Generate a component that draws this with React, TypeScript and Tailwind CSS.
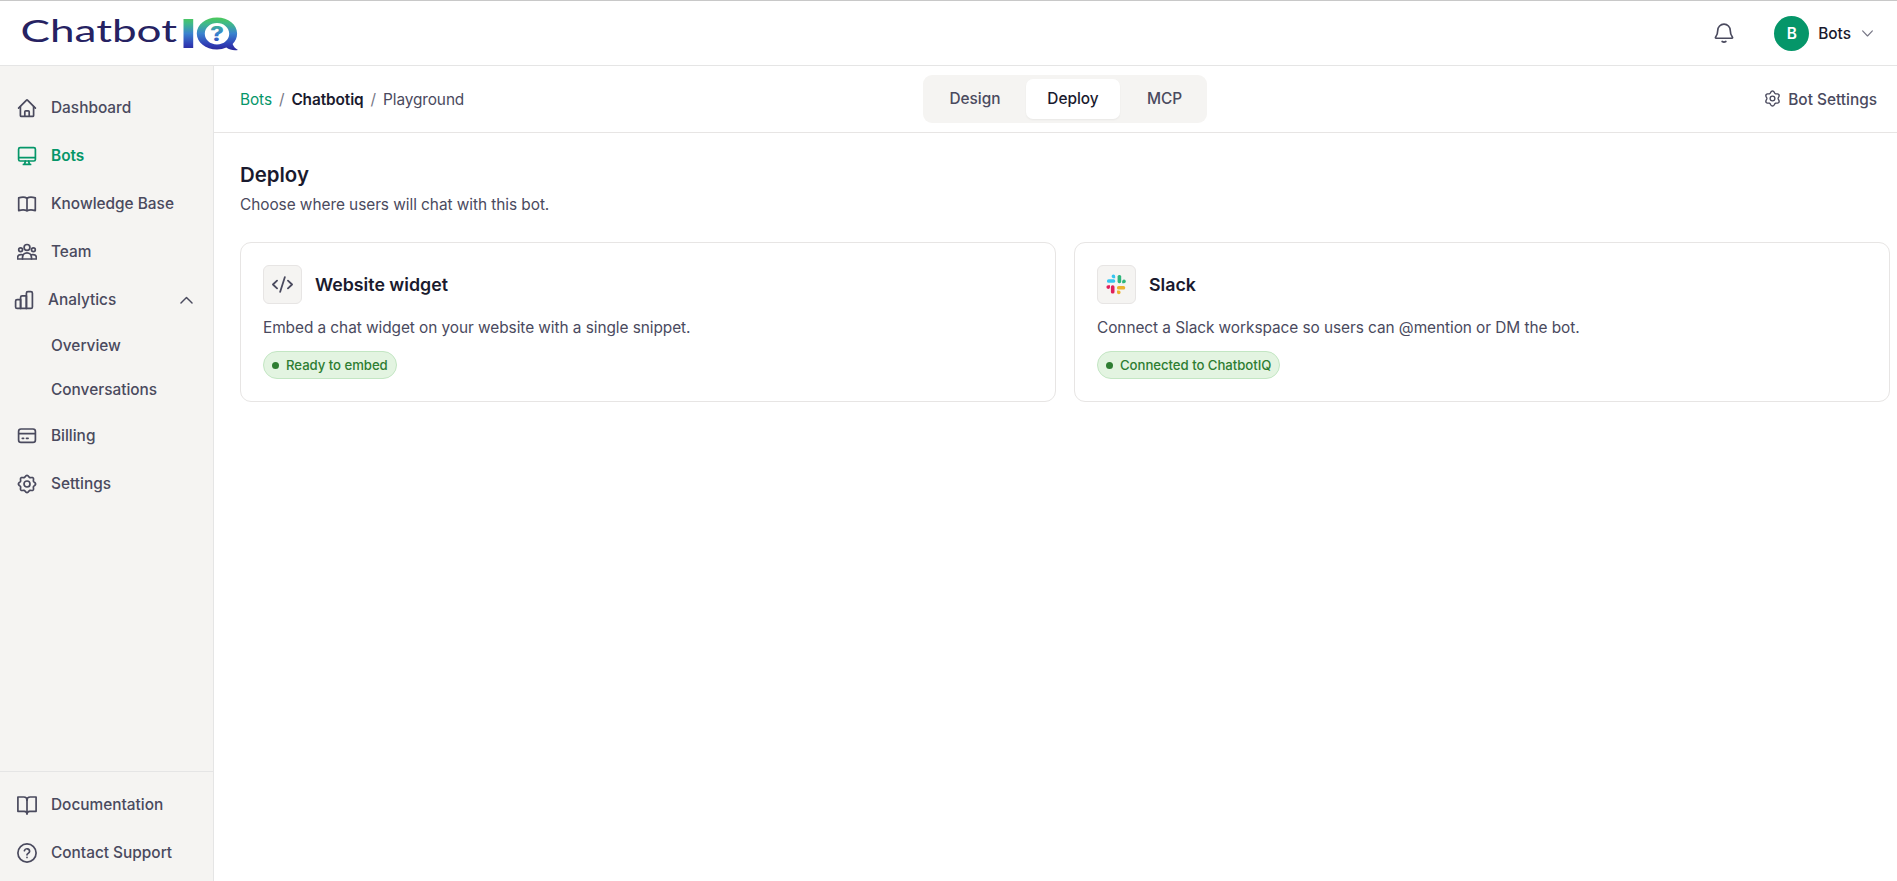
import type { ReactNode } from "react";

function Icon({
  size = 20,
  stroke = 1.7,
  className = "",
  children,
}: {
  size?: number;
  stroke?: number;
  className?: string;
  children: ReactNode;
}) {
  return (
    <svg
      width={size}
      height={size}
      viewBox="0 0 20 20"
      fill="none"
      stroke="currentColor"
      strokeWidth={stroke}
      strokeLinecap="round"
      strokeLinejoin="round"
      className={`shrink-0 ${className}`}
    >
      {children}
    </svg>
  );
}

// Closed outline whose radius swings between the gear's teeth and notches
function gearPath(teeth: number, radius: number, depth: number) {
  const points = Array.from({ length: 121 }, (_, i) => {
    const angle = (i / 120) * Math.PI * 2;
    const r = radius + depth * Math.cos(teeth * angle);
    return `${(10 + r * Math.sin(angle)).toFixed(2)} ${(10 - r * Math.cos(angle)).toFixed(2)}`;
  });
  return `M${points.join("L")}Z`;
}

const icons = {
  home: (
    <>
      <path d="M1.6 10.2 9.3 2.3a1 1 0 0 1 1.4 0l7.7 7.9" />
      <path d="M3.4 8.6v8.8c0 .6.4 1 1 1h11.2c.6 0 1-.4 1-1V8.6" />
      <path d="M7.8 18.2v-4.4c0-.6.4-1 1-1h2.4c.6 0 1 .4 1 1v4.4" />
    </>
  ),
  bots: (
    <>
      <rect x="1.6" y="1.6" width="16.8" height="13.4" rx="1.6" />
      <path d="M1.8 11.6h16.4M8.3 15.2l-.7 3M11.7 15.2l.7 3M6.4 18.4h7.2" />
    </>
  ),
  book: (
    <>
      <path d="M10 4.2C8.2 3 4.6 2.9 1.7 3.9v12.7c2.9-.9 6.5-.8 8.3.2 1.8-1 5.4-1.1 8.3-.2V3.9C15.4 2.9 11.8 3 10 4.2Z" />
      <path d="M10 4.2v12.4" />
    </>
  ),
  team: (
    <>
      <circle cx="10" cy="5.4" r="2.9" />
      <circle cx="3.6" cy="7.7" r="1.9" />
      <circle cx="16.4" cy="7.7" r="1.9" />
      <path d="M5.5 17v-1.6a4.5 4.5 0 0 1 9 0V17" />
      <path d="M5.6 12.8c-2.8-.8-5 .6-5 2.9V17h18.8v-1.3c0-2.3-2.2-3.7-5-2.9" />
    </>
  ),
  analytics: (
    <>
      <path d="M1.6 11.2c0-.9.6-1.5 1.5-1.5h3.5v8.7H3.1c-.9 0-1.5-.6-1.5-1.5Z" />
      <path d="M6.6 7.4c0-.9.6-1.5 1.5-1.5h4.3v12.5H6.6Z" />
      <path d="M12.4 3.2c0-.9.6-1.6 1.5-1.6h3c.9 0 1.5.7 1.5 1.6v13.7c0 .9-.6 1.5-1.5 1.5h-4.5Z" />
    </>
  ),
  billing: (
    <>
      <rect x="1.6" y="3" width="16.8" height="13.4" rx="2.4" />
      <path d="M1.8 7.7h16.4M5.3 12.3h1.3M9.5 12.3h1.6" />
    </>
  ),
  settings: (
    <>
      <path d={gearPath(8, 7.8, 0.8)} />
      <circle cx="10" cy="10" r="3" />
    </>
  ),
  docs: (
    <>
      <path d="M10 5.2C10 3.4 8.6 2 6.8 2H.9v14.3h6.3c1.6 0 2.8 1 2.8 2.5 0-1.5 1.2-2.5 2.8-2.5h6.3V2h-5.9C11.4 2 10 3.4 10 5.2Z" />
      <path d="M10 5.2v13.6" />
    </>
  ),
  help: (
    <>
      <circle cx="10" cy="10" r="9.1" />
      <path d="M7.4 7.7a2.65 2.65 0 0 1 5.2.7c0 1.7-2.6 2.1-2.6 3.4M10 14.4v.1" />
    </>
  ),
};

function NavItem({
  icon,
  label,
  active = false,
}: {
  icon: ReactNode;
  label: string;
  active?: boolean;
}) {
  return (
    <a
      className={`flex h-12 items-center gap-[14px] pl-[17px] ${
        active ? "font-semibold text-[#059669]" : "font-medium text-[#4a4a5e]"
      }`}
    >
      <Icon>{icon}</Icon>
      <span>{label}</span>
    </a>
  );
}

function Logo() {
  return (
    <svg width="220" height="40" viewBox="20 12.5 220 40">
      <defs>
        <linearGradient id="iq" x1="0" y1="17" x2="0" y2="49" gradientUnits="userSpaceOnUse">
          <stop offset="0" stopColor="#4cc95a" />
          <stop offset="0.2" stopColor="#3fb98a" />
          <stop offset="0.5" stopColor="#3a83cf" />
          <stop offset="0.85" stopColor="#2f3db5" />
          <stop offset="1" stopColor="#2b2a9c" />
        </linearGradient>
      </defs>
      <text
        x="20.5"
        y="41.5"
        fontFamily="Lato"
        fontSize="30.5"
        fill="#262262"
        textLength="156.5"
        lengthAdjust="spacingAndGlyphs"
      >
        Chatbot
      </text>
      <rect x="183.5" y="18.5" width="9.7" height="29" fill="url(#iq)" />
      <path
        fill="url(#iq)"
        fillRule="evenodd"
        d="M217 17c-11.4 0-20.2 7.2-20.2 16S205.600 49 217 49c3.500 0 6.500-.7 9.300-2 3.400 2.300 7.200 3.300 11.700 2.500-2.700-1.400-4.500-3.500-5.400-6 2.900-2.800 4.500-6.500 4.500-10.500 0-8.800-8.700-16-20.100-16Zm0 5.500c6.900 0 12.200 4.800 12.200 10.800S223.900 44 217 44s-12.200-4.700-12.200-10.700S210.100 22.500 217 22.500Z"
      />
      <text
        x="210"
        y="40.8"
        fontFamily="Inter"
        fontWeight="800"
        fontSize="20"
        fill="url(#iq)"
        textLength="14"
        lengthAdjust="spacingAndGlyphs"
      >
        ?
      </text>
    </svg>
  );
}

function SlackMark() {
  return (
    <svg width="21" height="21" viewBox="0 0 21 21">
      <g fill="#36C5F0">
        <rect x="1" y="5.2" width="8.2" height="3.6" rx="1.6" />
        <path d="M9.2 4.2H7.3a1.8 1.8 0 1 1 1.9-1.8Z" />
      </g>
      <g fill="#2EB67D">
        <rect x="11.6" y="1" width="3.6" height="8.2" rx="1.6" />
        <path d="M16.2 9.2V7.3a1.8 1.8 0 1 1 1.8 1.9Z" />
      </g>
      <g fill="#ECB22E">
        <rect x="11" y="12" width="8.2" height="3.6" rx="1.6" />
        <path d="M11 16.6h1.9a1.8 1.8 0 1 1-1.9 1.8Z" />
      </g>
      <g fill="#E01E5A">
        <rect x="4.9" y="11.3" width="3.6" height="8.2" rx="1.6" />
        <path d="M4 11.3v1.9a1.8 1.8 0 1 1-1.8-1.9Z" />
      </g>
    </svg>
  );
}

function ChannelCard({
  icon,
  title,
  description,
  status,
}: {
  icon: ReactNode;
  title: string;
  description: string;
  status: string;
}) {
  return (
    <div className="h-[160px] rounded-[11px] border border-[#e7e5e4] px-[22px] pt-[22px]">
      <div className="flex items-center gap-[13px]">
        <div className="flex h-[39px] w-[39px] items-center justify-center rounded-md border border-[#e7e5e4] bg-[#f5f4f2] text-[#4a4a5e]">
          {icon}
        </div>
        <h2 className="text-[17.8px] leading-6 font-semibold text-[#1a1a2e]">{title}</h2>
      </div>
      <p className="mt-3 text-[15.4px] leading-[23px] tracking-[-0.06px] text-[#4a4a5e]">
        {description}
      </p>
      <div className="mt-3 inline-flex h-7 items-center gap-[7px] rounded-full border border-[#c3e6c3] bg-[#e3f4e1] px-2 text-[13.2px] font-medium tracking-[-0.05px] text-[#2e7d32]">
        <span className="h-[7px] w-[7px] rounded-full bg-[#2e7d32]" />
        <span className="pt-px">{status}</span>
      </div>
    </div>
  );
}

export default function App() {
  return (
    <div className="flex h-[881px] w-full flex-col overflow-hidden border-t border-[#c8c8c8] bg-white font-['Inter',sans-serif] text-[15.4px] text-[#4a4a5e]">
      <header className="flex h-[65px] shrink-0 items-center justify-between border-b border-[#e5e5e5] pr-[23px] pl-5">
        <Logo />
        <div className="flex items-center">
          <Icon size={22} stroke={1.5}>
            <path d="M4.3 7.7a5.7 5.7 0 0 1 11.4 0c0 3.6 1 4.9 2 6.2.3.4 0 .9-.4.9H2.7c-.4 0-.7-.5-.4-.9 1-1.3 2-2.6 2-6.2Z" />
            <path d="M8.3 17.7c1 .7 2.4.7 3.4 0" />
          </Icon>
          <div className="ml-[39px] flex h-[35px] w-[35px] items-center justify-center rounded-full bg-[#059669] font-semibold text-white">
            <span className="pt-px">B</span>
          </div>
          <span className="ml-[9px] pt-px font-medium text-[#1a1a2e]">Bots</span>
          <Icon size={13} stroke={1.8} className="ml-[10px] text-[#777786]">
            <path d="m2.5 6 7.5 7.8L17.5 6" />
          </Icon>
        </div>
      </header>

      <div className="flex min-h-0 flex-1">
        <aside className="flex w-[214px] shrink-0 flex-col justify-between border-r border-[#e5e5e5] bg-[#f5f4f2]">
          <nav className="pt-[18px]">
            <NavItem icon={icons.home} label="Dashboard" />
            <NavItem icon={icons.bots} label="Bots" active />
            <NavItem icon={icons.book} label="Knowledge Base" />
            <NavItem icon={icons.team} label="Team" />
            <div className="flex h-12 items-center gap-[14px] pr-5 pl-[14px] font-medium">
              <Icon>{icons.analytics}</Icon>
              <span className="flex-1">Analytics</span>
              <Icon size={13} stroke={2.2}>
                <path d="M1.5 14 10 5.5l8.5 8.5" />
              </Icon>
            </div>
            <a className="flex h-11 items-center pl-[51px] font-medium">Overview</a>
            <a className="flex h-11 items-center pl-[51px] font-medium">Conversations</a>
            <NavItem icon={icons.billing} label="Billing" />
            <NavItem icon={icons.settings} label="Settings" />
          </nav>
          <div className="border-t border-[#e5e5e5] pt-[9px] pb-[4px]">
            <NavItem icon={icons.docs} label="Documentation" />
            <NavItem icon={icons.help} label="Contact Support" />
          </div>
        </aside>

        <main className="min-w-0 flex-1">
          <div className="flex h-[67px] items-center border-b border-[#e7e5e4] pr-5 pl-[26px]">
            <div className="flex w-[683px] gap-[7px] pt-[2px] tracking-[-0.1px]">
              <span className="text-[#059669]">Bots</span>
              <span className="text-[#777786]">/</span>
              <span className="font-semibold text-[#1a1a2e]">Chatbotiq</span>
              <span className="text-[#777786]">/</span>
              <span>Playground</span>
            </div>
            <div className="flex h-12 items-center rounded-[9px] bg-[#f5f4f2] p-1 font-medium">
              <button className="h-10 w-[99px] pr-[3px]">Design</button>
              <button className="h-10 w-[94px] rounded-[7px] bg-white text-[#1a1a2e] shadow-xs">
                Deploy
              </button>
              <button className="h-10 w-[83px] pl-[6px]">MCP</button>
            </div>
            <div className="flex flex-1 items-center justify-end gap-[7px] font-medium">
              <Icon size={17} stroke={1.6}>
                <path d={gearPath(6, 7.7, 1.1)} />
                <circle cx="10" cy="10" r="2.8" />
              </Icon>
              <span className="pt-px">Bot Settings</span>
            </div>
          </div>

          <section className="pt-[28px] pr-[7px] pl-[26px]">
            <h1 className="text-[20.4px] leading-7 font-semibold text-[#1a1a2e]">Deploy</h1>
            <p className="mt-[4px] leading-[23px] tracking-[-0.05px]">
              Choose where users will chat with this bot.
            </p>
            <div className="mt-[26px] grid grid-cols-2 gap-[18px]">
              <ChannelCard
                icon={
                  <Icon size={21} stroke={1.7}>
                    <path d="M4.8 6.3.9 10l3.900 3.700M15.200 6.300l3.900 3.700-3.900 3.700M12.200 3 7.800 17" />
                  </Icon>
                }
                title="Website widget"
                description="Embed a chat widget on your website with a single snippet."
                status="Ready to embed"
              />
              <ChannelCard
                icon={<SlackMark />}
                title="Slack"
                description="Connect a Slack workspace so users can @mention or DM the bot."
                status="Connected to ChatbotIQ"
              />
            </div>
          </section>
        </main>
      </div>
    </div>
  );
}
